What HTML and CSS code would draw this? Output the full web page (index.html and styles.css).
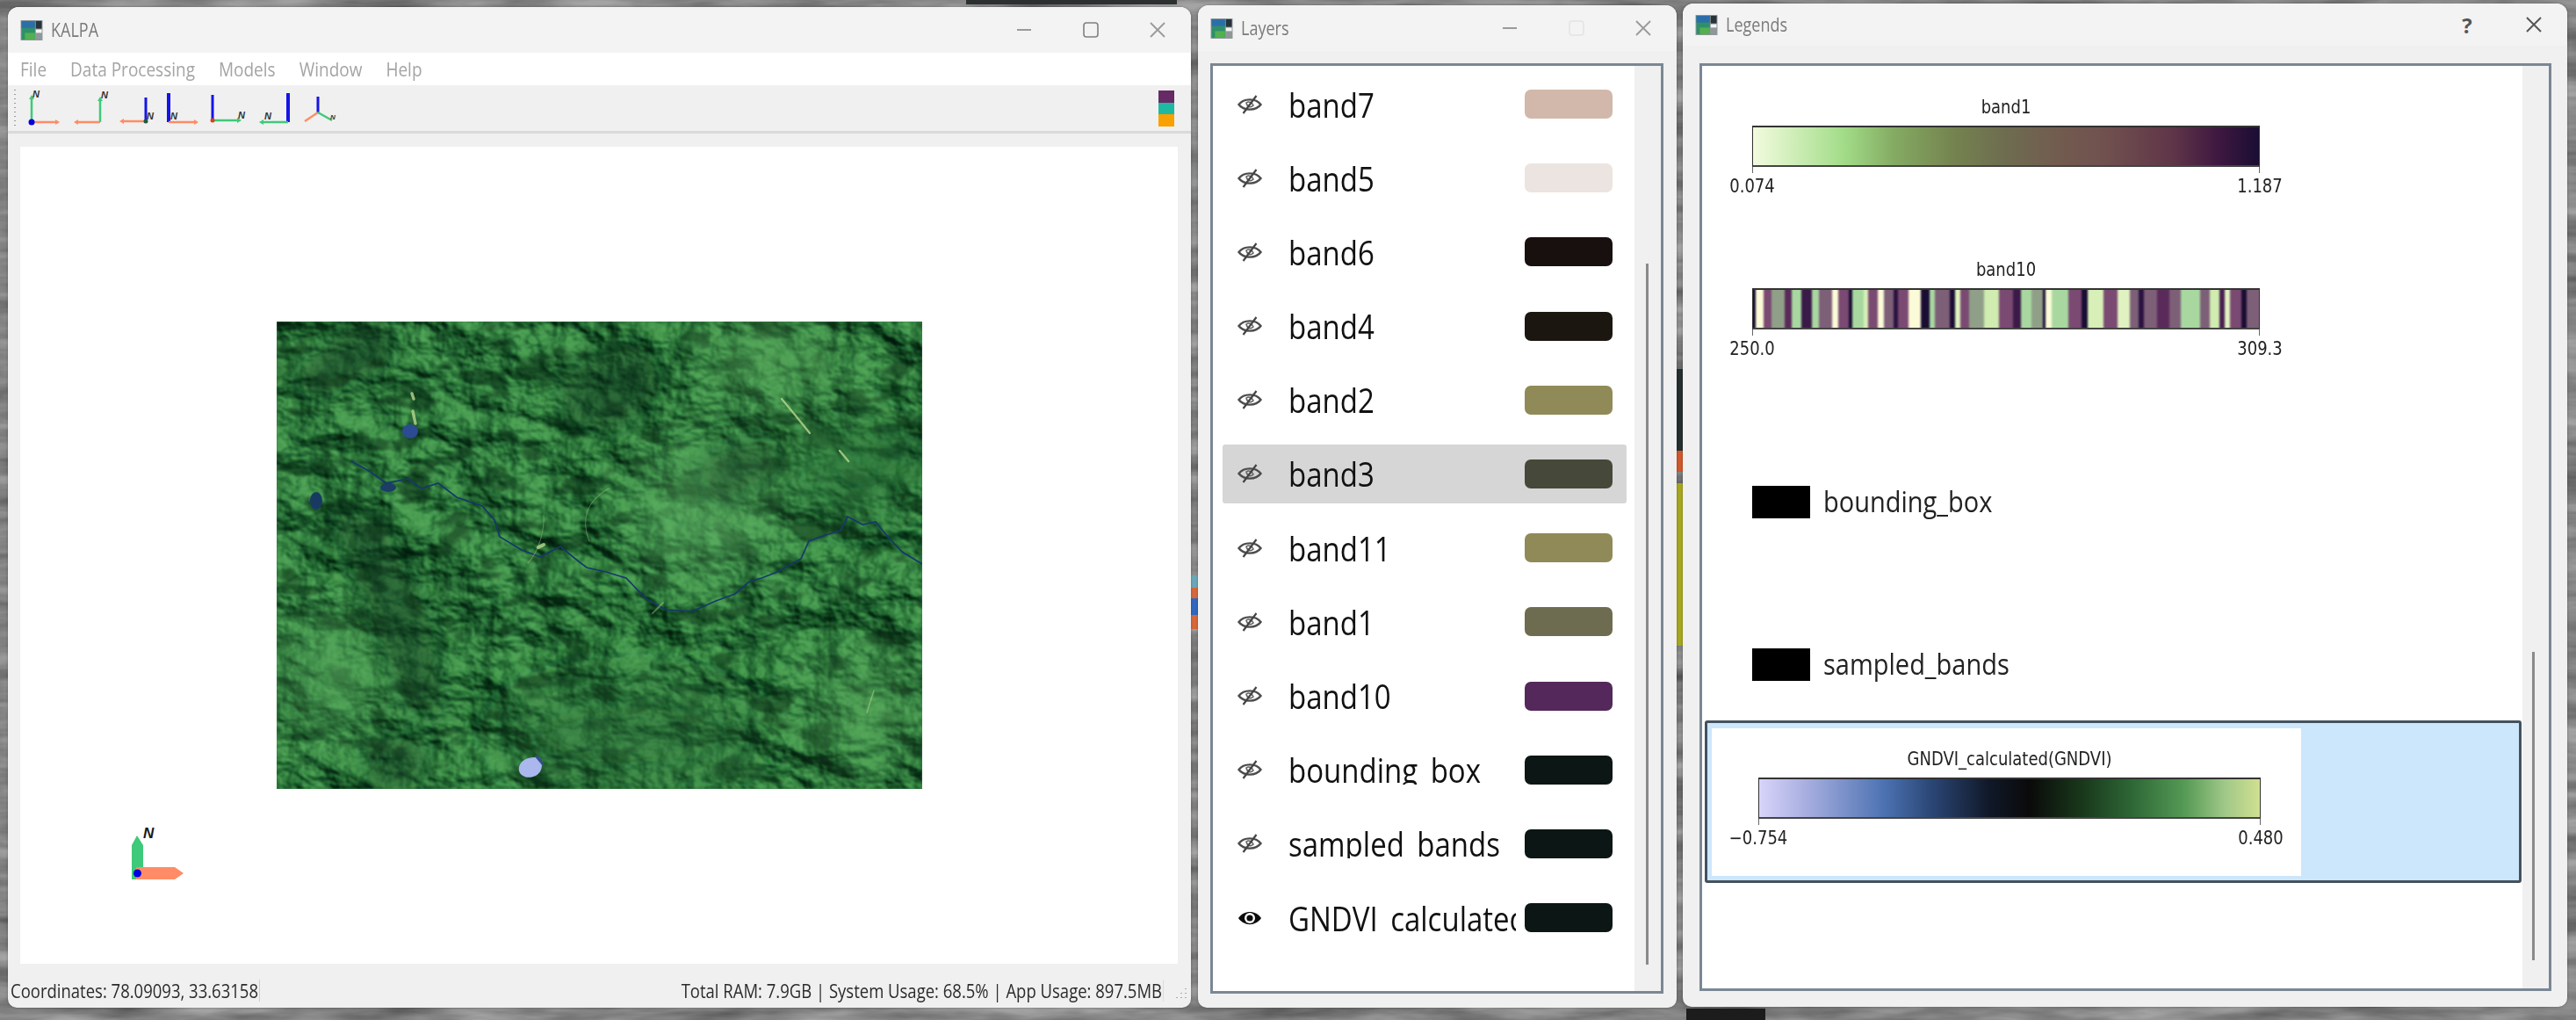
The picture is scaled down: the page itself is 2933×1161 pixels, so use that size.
FILE: index.html
```html
<!DOCTYPE html>
<html lang="en">
<head>
  <meta charset="UTF-8" />
  <title>KALPA</title>
  <link rel="stylesheet" href="styles.css">
</head>
<body>

  <!-- Wallpaper noise behind the windows -->
  <svg class="wallpaper" width="2933" height="1161">
    <filter id="wall-noise" x="0" y="0" width="100%" height="100%" color-interpolation-filters="sRGB">
      <feTurbulence type="fractalNoise" baseFrequency="0.008 0.05" numOctaves="4" seed="4"/>
      <feColorMatrix values="0 0 0 0 0  0 0 0 0 0  0 0 0 0 0  0.7 0 0 0 -0.15"/>
    </filter>
    <rect width="2933" height="1161" fill="#a4a4a4"/>
    <rect width="2933" height="1161" filter="url(#wall-noise)"/>
    <rect x="1100" y="0" width="240" height="5" fill="#2c3030"/>
    <rect x="1920" y="1148" width="90" height="13" fill="#1c1c1c"/>
    <rect x="1356" y="655" width="8" height="14" fill="#6aa8b8"/>
    <rect x="1356" y="669" width="8" height="12" fill="#d8683a"/>
    <rect x="1356" y="681" width="8" height="19" fill="#3068c0"/>
    <rect x="1356" y="700" width="8" height="16" fill="#d8683a"/>
    <rect x="1909" y="420" width="7" height="93" fill="#263030"/>
    <rect x="1909" y="513" width="7" height="24" fill="#d05a2c"/>
    <rect x="1909" y="550" width="7" height="185" fill="#a8a820"/>
  </svg>

  <svg class="defs" width="0" height="0">
    <symbol id="logo" viewBox="0 0 26 24">
      <rect width="26" height="24" fill="#8f979b"/>
      <rect x="1" y="1" width="16" height="22" fill="#2f8f6a"/>
      <rect x="1" y="1" width="16" height="8" fill="#2c6fa8"/>
      <rect x="5" y="15" width="12" height="8" fill="#52b050"/>
      <rect x="18" y="1" width="7" height="9" fill="#26333a"/>
      <rect x="18" y="11" width="7" height="4" fill="#f4f4f4"/>
    </symbol>
    <symbol id="eye-off" viewBox="0 0 28 22">
      <path d="M1.5 11 C7 3.5 21 3.5 26.5 11 C21 18.5 7 18.5 1.5 11 Z" fill="none" stroke="#4c4c4c" stroke-width="2.4"/>
      <path d="M10 9 C13 6.5 17 9 18 12 C15 15 11 14 10 9 Z" fill="none" stroke="#666" stroke-width="1.6"/>
      <line x1="6.5" y1="21" x2="21.5" y2="1" stroke="#444" stroke-width="2.2"/>
    </symbol>
    <symbol id="eye-on" viewBox="0 0 28 20">
      <path d="M1 10 C7 0.5 21 0.5 27 10 C21 19.5 7 19.5 1 10 Z" fill="#0c0c0c"/>
      <circle cx="14" cy="10" r="6" fill="#fff"/>
      <circle cx="14" cy="10" r="3.6" fill="#0c0c0c"/>
    </symbol>
  </svg>

  <!-- Main window -->
  <section class="window main-window">
    <header class="titlebar">
      <svg class="logo"><use href="#logo"/></svg>
      <span class="win-title"><span class="tall">KALPA</span></span>
      <div class="win-btn">
        <svg width="18" height="18"><line x1="1" y1="9" x2="17" y2="9" stroke="#9a9a9a" stroke-width="2"/></svg>
      </div>
      <div class="win-btn">
        <svg width="18" height="18"><rect x="1" y="1" width="16" height="16" rx="3" fill="none" stroke="#808080" stroke-width="1.6"/></svg>
      </div>
      <div class="win-btn">
        <svg width="18" height="18"><path d="M1 1 L17 17 M17 1 L1 17" stroke="#9a9a9a" stroke-width="1.8"/></svg>
      </div>
    </header>

    <nav class="menubar">
      <span class="tall">File</span>
      <span class="tall">Data Processing</span>
      <span class="tall">Models</span>
      <span class="tall">Window</span>
      <span class="tall">Help</span>
    </nav>

    <div class="toolbar">
      <svg class="axes" width="400" height="53" viewBox="0 97 400 53">
        <!-- grip -->
        <path d="M17 102v1M17 107v1M17 112v1M17 117v1M17 122v1M17 127v1M17 132v1M17 137v1M17 142v1" stroke="#999" stroke-width="2"/>
        <g class="axis-lines">
          <!-- north up -->
          <path class="green" d="M36 139V112"/><path class="orange" d="M36 139H64"/>
          <path class="green-fill" d="M33 113l3-5 3 5z"/><path class="orange-fill" d="M63 136l5 3-5 3z"/>
          <circle cx="36" cy="139" r="3.5" fill="#0000e0"/>
          <text x="37" y="111">N</text>
          <!-- north up, east left -->
          <path class="green" d="M114 139V114"/><path class="orange" d="M114 139H88"/>
          <path class="green-fill" d="M111 115l3-5 3 5z"/><path class="orange-fill" d="M89 136l-5 3 5 3z"/>
          <text x="115" y="112">N</text>
          <!-- blue up, orange left -->
          <path class="blue" d="M166 138V111"/><path class="orange" d="M166 138H140"/>
          <path class="orange-fill" d="M141 135l-5 3 5 3z"/>
          <circle cx="166" cy="138" r="2.5" fill="#1f5a40"/>
          <text x="167" y="136">N</text>
          <!-- blue up, orange right -->
          <path class="blue wide" d="M192 139V106"/><path class="orange" d="M192 139H222"/>
          <path class="orange-fill" d="M221 136l5 3-5 3z"/>
          <text x="194" y="136">N</text>
          <!-- blue up, green right -->
          <path class="blue" d="M242 137V108"/><path class="green" d="M242 137H271"/>
          <path class="green-fill" d="M270 134l5 3-5 3z"/>
          <circle cx="242" cy="137" r="2.5" fill="#d8401c"/>
          <text x="271" y="135">N</text>
          <!-- blue up, green left -->
          <path class="blue wide" d="M328 139V106"/><path class="green" d="M328 139H299"/>
          <path class="green-fill" d="M300 136l-5 3 5 3z"/>
          <text x="301" y="136">N</text>
          <!-- iso -->
          <path class="blue" d="M362 128V110"/><path class="orange" d="M362 128L347 138"/><path class="green" d="M362 128L378 137"/>
          <text x="376" y="136" class="small">N</text>
        </g>
      </svg>
      <div class="colour-chip">
        <span class="chip-purple"></span>
        <span class="chip-teal"></span>
        <span class="chip-orange"></span>
      </div>
    </div>

    <div class="canvas-wrap">
      <div class="canvas">
        <!-- Hillshade drawn from noise, with the river and lakes on top -->
        <svg class="map" width="735" height="532" viewBox="0 0 735 532">
          <defs>
            <filter id="terrain" x="0" y="0" width="100%" height="100%" color-interpolation-filters="sRGB">
              <feTurbulence type="fractalNoise" baseFrequency="0.012 0.018" numOctaves="6" seed="23" result="noise"/>
              <feDiffuseLighting in="noise" surfaceScale="24" diffuseConstant="0.86" lighting-color="#ffffff">
                <feDistantLight azimuth="320" elevation="52"/>
              </feDiffuseLighting>
              <feGaussianBlur stdDeviation="0.8"/>
              <feComponentTransfer>
                <feFuncR type="table" tableValues="0.01 0.03 0.08 0.14 0.20 0.30 0.55"/>
                <feFuncG type="table" tableValues="0.10 0.18 0.30 0.40 0.50 0.63 0.82"/>
                <feFuncB type="table" tableValues="0.05 0.08 0.14 0.20 0.25 0.33 0.48"/>
              </feComponentTransfer>
            </filter>
            <!-- dark valleys scattered over the hills -->
            <filter id="valleys" x="0" y="0" width="100%" height="100%" color-interpolation-filters="sRGB">
              <feTurbulence type="fractalNoise" baseFrequency="0.022 0.04" numOctaves="3" seed="9"/>
              <feColorMatrix values="0 0 0 0 0.03  0 0 0 0 0.17  0 0 0 0 0.08  7 0 0 0 -3.9"/>
              <feGaussianBlur stdDeviation="1.2"/>
            </filter>
            <filter id="soft"><feGaussianBlur stdDeviation="14"/></filter>
            <filter id="softer" x="-50%" y="-50%" width="200%" height="200%"><feGaussianBlur stdDeviation="30"/></filter>
          </defs>
          <rect width="735" height="532" fill="#2f7a3d"/>
          <rect width="735" height="532" filter="url(#terrain)"/>
          <rect width="735" height="532" filter="url(#valleys)" opacity=".55"/>
          <!-- broad light and dark areas -->
          <g filter="url(#softer)">
            <ellipse cx="485" cy="215" rx="75" ry="75" fill="#62b266" opacity=".55"/>
            <ellipse cx="560" cy="45" rx="80" ry="40" fill="#5aa95e" opacity=".6"/>
            <ellipse cx="60" cy="400" rx="60" ry="70" fill="#58a65c" opacity=".55"/>
            <ellipse cx="670" cy="440" rx="60" ry="60" fill="#5aa85c" opacity=".5"/>
            <ellipse cx="660" cy="170" rx="70" ry="50" fill="#2a6e38" opacity=".7"/>
            <ellipse cx="400" cy="470" rx="150" ry="60" fill="#2a6b36" opacity=".5"/>
          </g>
          <g filter="url(#soft)" fill="#08301a" opacity=".5">
            <path d="M60 210 L120 230 L175 340 L190 450 L150 440 L110 340 Z"/>
            <path d="M90 0 L130 0 L125 50 L40 90 L20 60 Z"/>
            <path d="M320 60 L420 20 L440 80 L380 130 L330 110 Z"/>
            <path d="M480 160 L560 130 L570 170 L500 210 Z"/>
            <path d="M100 480 L170 470 L160 532 L110 532 Z"/>
            <path d="M680 110 L735 130 L735 180 L690 150 Z" opacity=".5"/>
          </g>
          <!-- river -->
          <path d="M85 159 L105 170 L125 184 L149 179 L165 190 L184 184 L205 200 L234 210 L248 226 L254 245 L279 260 L300 268 L323 256 L340 270 L353 280 L375 285 L398 292 L420 315 L443 328 L473 330 L500 318 L522 310 L538 296 L552 292 L570 285 L597 270 L606 250 L625 243 L642 238 L650 222 L667 231 L682 228 L696 245 L712 262 L735 276" fill="none" stroke="#16386a" stroke-width="1.7"/>
          <!-- lakes -->
          <ellipse cx="152" cy="125" rx="9" ry="8" fill="#2b4b92"/>
          <ellipse cx="45" cy="204" rx="7" ry="10" fill="#183a62"/>
          <ellipse cx="127" cy="189" rx="9" ry="5" fill="#1c3d66"/>
          <path d="M276 507 C278 497 292 494 300 497 C304 505 302 515 292 518 C284 521 274 516 276 507 Z" fill="#aab8ee"/>
          <path d="M293 494 C300 494 304 500 303 506 L298 500 Z" fill="#36508a"/>
          <!-- bright streaks -->
          <g fill="none" stroke="#bcd88e" stroke-linecap="round" opacity=".8">
            <path d="M575 88 L590 106 L607 127" stroke-width="2.2"/>
            <path d="M641 147 L651 159" stroke-width="2.4"/>
            <path d="M154 82 L156 88 M155 102 L158 116" stroke-width="3.5"/>
            <path d="M298 257 L304 254" stroke-width="4"/>
            <path d="M428 332 L440 320" stroke-width="2" opacity=".5"/>
            <path d="M286 275 C300 260 305 235 304 220" stroke-width="1.1" opacity=".45"/>
            <path d="M356 250 C346 225 352 205 378 190" stroke-width="1.1" opacity=".45"/>
            <path d="M672 445 L680 420" stroke-width="1.6" opacity=".6"/>
          </g>
        </svg>

        <!-- Compass overlay in the corner of the map canvas -->
        <svg class="compass" width="80" height="72" viewBox="0 0 80 72">
          <path d="M21 22 L27 11 L34 22 L34 61 L21 61 Z" fill="#3fc97a"/>
          <path d="M26 47 H70 L80 54 L70 61 H26 Z" fill="#ff8c66"/>
          <circle cx="27.5" cy="54" r="4.5" fill="#0000e0"/>
          <text x="34" y="14">N</text>
        </svg>
      </div>
    </div>

    <footer class="statusbar">
      <span class="coords"><span class="tall">Coordinates: 78.09093, 33.63158</span></span>
      <span class="usage"><span class="tall">Total RAM: 7.9GB | System Usage: 68.5% | App Usage: 897.5MB</span></span>
      <svg class="grip" width="14" height="14"><path d="M11 2v1M11 7v1M11 12v1M6 7v1M6 12v1M1 12v1" stroke="#aaa" stroke-width="2"/></svg>
    </footer>
  </section>

  <!-- Layers window -->
  <section class="window layers-window">
    <header class="titlebar">
      <svg class="logo"><use href="#logo"/></svg>
      <span class="win-title"><span class="tall">Layers</span></span>
      <div class="win-btn">
        <svg width="18" height="18"><line x1="1" y1="9" x2="17" y2="9" stroke="#9a9a9a" stroke-width="2"/></svg>
      </div>
      <div class="win-btn">
        <svg width="18" height="18"><rect x="1" y="1" width="16" height="16" rx="3" fill="none" stroke="#e4e4e4" stroke-width="1.6"/></svg>
      </div>
      <div class="win-btn">
        <svg width="18" height="18"><path d="M1 1 L17 17 M17 1 L1 17" stroke="#9a9a9a" stroke-width="1.8"/></svg>
      </div>
    </header>

    <div class="frame">
      <ul class="layer-list">
        <li class="layer"><svg class="eye"><use href="#eye-off"/></svg><span class="layer-name"><span class="tall">band7</span></span><span class="swatch c-band7"></span></li>
        <li class="layer"><svg class="eye"><use href="#eye-off"/></svg><span class="layer-name"><span class="tall">band5</span></span><span class="swatch c-band5"></span></li>
        <li class="layer"><svg class="eye"><use href="#eye-off"/></svg><span class="layer-name"><span class="tall">band6</span></span><span class="swatch c-band6"></span></li>
        <li class="layer"><svg class="eye"><use href="#eye-off"/></svg><span class="layer-name"><span class="tall">band4</span></span><span class="swatch c-band4"></span></li>
        <li class="layer"><svg class="eye"><use href="#eye-off"/></svg><span class="layer-name"><span class="tall">band2</span></span><span class="swatch c-band2"></span></li>
        <li class="layer selected"><svg class="eye"><use href="#eye-off"/></svg><span class="layer-name"><span class="tall">band3</span></span><span class="swatch c-band3"></span></li>
        <li class="layer"><svg class="eye"><use href="#eye-off"/></svg><span class="layer-name"><span class="tall">band11</span></span><span class="swatch c-band2"></span></li>
        <li class="layer"><svg class="eye"><use href="#eye-off"/></svg><span class="layer-name"><span class="tall">band1</span></span><span class="swatch c-band1"></span></li>
        <li class="layer"><svg class="eye"><use href="#eye-off"/></svg><span class="layer-name"><span class="tall">band10</span></span><span class="swatch c-band10"></span></li>
        <li class="layer"><svg class="eye"><use href="#eye-off"/></svg><span class="layer-name clipped"><span class="tall">bounding_box</span></span><span class="swatch c-dark"></span></li>
        <li class="layer"><svg class="eye"><use href="#eye-off"/></svg><span class="layer-name clipped"><span class="tall">sampled_bands</span></span><span class="swatch c-dark"></span></li>
        <li class="layer"><svg class="eye eye-on"><use href="#eye-on"/></svg><span class="layer-name clipped"><span class="tall">GNDVI_calculated(GNDVI)</span></span><span class="swatch c-dark"></span></li>
      </ul>
      <div class="scroll layers-scroll"><span class="thumb"></span></div>
    </div>
  </section>

  <!-- Legends window -->
  <section class="window legends-window">
    <header class="titlebar">
      <svg class="logo"><use href="#logo"/></svg>
      <span class="win-title"><span class="tall">Legends</span></span>
      <div class="win-btn help">?</div>
      <div class="win-btn">
        <svg width="20" height="18"><path d="M2 1 L18 17 M18 1 L2 17" stroke="#555" stroke-width="2"/></svg>
      </div>
    </header>

    <div class="frame">
      <div class="legend-list">

        <div class="legend-item">
          <div class="colorbar">
            <div class="cb-title"><span class="tall">band1</span></div>
            <div class="cb-bar grad-band1"></div>
            <div class="cb-ticks"></div>
            <div class="cb-labels"><span><span class="tall">0.074</span></span><span><span class="tall">1.187</span></span></div>
          </div>
        </div>

        <div class="legend-item">
          <div class="colorbar">
            <div class="cb-title"><span class="tall">band10</span></div>
            <div class="cb-bar stripes"></div>
            <div class="cb-ticks"></div>
            <div class="cb-labels"><span><span class="tall">250.0</span></span><span><span class="tall">309.3</span></span></div>
          </div>
        </div>

        <div class="legend-item vector-item">
          <span class="vector-box"></span>
          <span class="vector-name"><span class="tall">bounding_box</span></span>
        </div>

        <div class="legend-item vector-item">
          <span class="vector-box"></span>
          <span class="vector-name"><span class="tall">sampled_bands</span></span>
        </div>

        <div class="legend-item selected-legend">
          <div class="legend-inner">
            <div class="colorbar narrow">
              <div class="cb-title"><span class="tall">GNDVI_calculated(GNDVI)</span></div>
              <div class="cb-bar grad-gndvi"></div>
              <div class="cb-ticks"></div>
              <div class="cb-labels"><span><span class="tall">&minus;0.754</span></span><span><span class="tall">0.480</span></span></div>
            </div>
          </div>
        </div>

      </div>
      <div class="scroll legends-scroll"><span class="thumb"></span></div>
    </div>
  </section>

</body>
</html>
```

FILE: styles.css
```css
/* General */
* {
  box-sizing: border-box;
}

body {
  position: relative;
  width: 2933px;
  height: 1161px;
  margin: 0;
  overflow: hidden;
  background: #8a8a8a;
  font-family: "Open Sans", "Noto Sans", sans-serif;
}

.wallpaper {
  position: absolute;
  left: 0;
  top: 0;
}

.defs {
  position: absolute;
}

/* Screenshot is stretched a little in height */
.tall {
  display: inline-block;
  transform: scaleY(1.16);
}

/* Windows sit on the desktop at their own place */
.window {
  position: absolute;
  display: flex;
  flex-direction: column;
  background: #f0f0f0;
  border-radius: 12px 12px 10px 10px;
  box-shadow: 0 0 3px rgba(0, 0, 0, 0.35);
}

.main-window {
  left: 9px;
  top: 8px;
  width: 1347px;
  height: 1139px;
}

.layers-window {
  left: 1364px;
  top: 6px;
  width: 545px;
  height: 1141px;
}

.legends-window {
  left: 1916px;
  top: 4px;
  width: 1007px;
  height: 1142px;
}

/* Title bar */
.titlebar {
  display: flex;
  align-items: center;
  flex: none;
  height: 52px;
  padding-left: 14px;
  background: #f3f3f3;
  border-radius: 12px 12px 0 0;
}

.legends-window .titlebar {
  height: 48px;
}

.logo {
  flex: none;
  width: 26px;
  height: 23px;
  margin-right: 9px;
}

.win-title {
  flex: 1;
  font-size: 18px;
  color: #7a7a7a;
}

.win-btn {
  display: flex;
  align-items: center;
  justify-content: center;
  flex: none;
  width: 76px;
}

.help {
  font-size: 24px;
  font-weight: 700;
  color: #555;
}

/* Menu */
.menubar {
  display: flex;
  align-items: center;
  gap: 27px;
  flex: none;
  height: 37px;
  padding-left: 14px;
  background: #fff;
  font-size: 19px;
  color: #a4a4a4;
}

/* Toolbar */
.toolbar {
  display: flex;
  align-items: flex-start;
  justify-content: space-between;
  flex: none;
  height: 55px;
  padding-right: 19px;
  background: #f0f0f0;
  border-bottom: 3px solid #d9d9d9;
}

.axes {
  margin-left: -9px;
}

.axis-lines path {
  fill: none;
}

.axis-lines .green {
  stroke: #3fc97a;
  stroke-width: 2.5;
}

.axis-lines .orange {
  stroke: #ff8c66;
  stroke-width: 2.5;
}

.axis-lines .blue {
  stroke: #1414e8;
  stroke-width: 3;
}

.axis-lines .wide {
  stroke-width: 4;
}

.axis-lines .green-fill {
  fill: #3fc97a;
}

.axis-lines .orange-fill {
  fill: #ff8c66;
}

.axis-lines text {
  font-family: "Liberation Sans", sans-serif;
  font-size: 11px;
  font-weight: 700;
  font-style: italic;
  fill: #333;
}

.axis-lines text.small {
  font-size: 8px;
}

.colour-chip {
  display: flex;
  flex-direction: column;
  width: 18px;
  margin-top: 6px;
}

.colour-chip span {
  height: 13.5px;
}

.chip-purple {
  background: #662a66;
}

.chip-teal {
  background: #1fb9a1;
}

.chip-orange {
  background: #f8a100;
}

/* Map canvas */
.canvas-wrap {
  flex: 1;
  padding: 15px 15px 0 14px;
}

.canvas {
  position: relative;
  display: flex;
  align-items: center;
  justify-content: center;
  height: 100%;
  background: #fff;
}

.map {
  display: block;
}

.compass {
  position: absolute;
  left: 106px;
  top: 773px;
}

.compass text {
  font-family: "Liberation Sans", sans-serif;
  font-size: 17px;
  font-weight: 700;
  font-style: italic;
  fill: #1a1a1a;
}

/* Status bar */
.statusbar {
  display: flex;
  align-items: center;
  justify-content: space-between;
  flex: none;
  height: 50px;
  padding: 10px 0 0 3px;
  font-size: 18.5px;
  color: #2b2b2b;
}

.coords {
  padding-right: 1px;
  border-right: 1px solid #cfcfcf;
}

.usage {
  margin-left: auto;
  padding-right: 1px;
  border-right: 1px solid #dcdcdc;
}

.grip {
  margin: 6px 3px 0 14px;
}

/* Frames holding the lists */
.frame {
  display: flex;
  flex: 1;
  margin: 14px 15px 16px 14px;
  background: #fff;
  border: 3px solid #7a8794;
}

.legends-window .frame {
  margin: 20px 18px 18px 19px;
}

.scroll {
  position: relative;
  flex: none;
  width: 30px;
  background: #f0f0f0;
}

.thumb {
  display: block;
  width: 3px;
  background: #8a8a8a;
}

.layers-scroll .thumb {
  height: 798px;
  margin: 225px 0 0 13px;
}

.legends-scroll .thumb {
  height: 351px;
  margin: 667px 0 0 11px;
}

/* Layer rows */
.layer-list {
  flex: 1;
  min-width: 0;
  display: flex;
  flex-direction: column;
  gap: 17.2px;
  margin: 0;
  padding: 10px 9px 0 11px;
  list-style: none;
}

.layer {
  display: flex;
  align-items: center;
  flex: none;
  height: 67px;
  padding: 0 16px 0 17px;
  border-radius: 3px;
  font-size: 33px;
  color: #111;
}

.layer.selected {
  background: #d6d6d6;
}

.eye {
  flex: none;
  width: 28px;
  height: 22px;
}

.eye-on {
  height: 20px;
}

.layer-name {
  flex: 1;
  min-width: 0;
  height: 46px;
  margin: 2px 10px 0 30px;
  white-space: nowrap;
  line-height: 46px;
}

/* Long names are cut just under the baseline, as in the app */
.clipped {
  height: 39px;
  margin: -5px 10px 0 30px;
  padding-top: 0;
  overflow: hidden;
}

.swatch {
  flex: none;
  width: 100px;
  height: 33px;
  border-radius: 7px;
}

.c-band7 { background: #d2b8aa; }
.c-band5 { background: #ece4e0; }
.c-band6 { background: #18100f; }
.c-band4 { background: #1c1610; }
.c-band2 { background: #908a58; }
.c-band3 { background: #46483a; }
.c-band1 { background: #6e6c50; }
.c-band10 { background: #54285a; }
.c-dark { background: #0c1614; }

/* Legend entries */
.legend-list {
  flex: 1;
  min-width: 0;
  padding-top: 3px;
}

.legend-item {
  height: 185px;
}

.colorbar {
  width: 578px;
  margin-left: 57px;
  padding-top: 33px;
  font-family: "DejaVu Sans", sans-serif;
  font-size: 18px;
  color: #222;
}

.cb-title {
  height: 32px;
  line-height: 22px;
  text-align: center;
}

.cb-bar {
  height: 47px;
  border-top: 2px solid #333;
  border-bottom: 2px solid #444;
  border-left: 1px solid #333;
  border-right: 1px solid #333;
}

.cb-ticks {
  height: 7px;
  border-left: 1px solid #666;
  border-right: 1px solid #666;
}

.cb-labels {
  display: flex;
  justify-content: space-between;
  margin: 4px -50px 0;
  line-height: 22px;
}

.cb-labels > span {
  width: 100px;
  text-align: center;
}

.grad-band1 {
  background: linear-gradient(to right, #f2fbdf 0%, #cfeeb8 8%, #a2dc88 18%, #84aa62 28%, #74824f 40%, #6e6c50 50%, #72594f 62%, #70504f 70%, #5f3548 83%, #3e1840 92%, #1a0d33 100%);
}

/* Stripes are softened with a blur, the bar border stays sharp */
.stripes {
  position: relative;
  overflow: hidden;
}

.stripes::before {
  content: "";
  position: absolute;
  left: -3px;
  right: -3px;
  top: -3px;
  bottom: -3px;
  filter: blur(1.2px);
  background: linear-gradient(to right,
    #1a0d33 0 1.1%, #fbfbd8 1.1% 2.5%, #7a4a72 2.5% 4.2%, #90a088 4.2% 6.7%, #5a2a5a 6.7% 8.1%,
    #a8d8a0 8.1% 10%, #3a1a48 10% 12%, #a8d8a0 12% 13.4%, #7d5f78 13.4% 15.9%, #fbfbd8 15.9% 17.2%,
    #7a4a72 17.2% 19.3%, #1a0d33 19.3% 19.9%, #a8d8a0 19.9% 22.2%, #d8efb8 22.2% 23%, #7a4a72 23% 24.9%,
    #fbfbd8 24.9% 26.2%, #7d5f78 26.2% 28%, #2a1240 28% 28.9%, #7a4a72 28.9% 31%, #fbfbd8 31% 33.3%,
    #1a0d33 33.3% 35%, #a8d8a0 35% 36%, #7d5f78 36% 39%, #1a0d33 39% 40%, #e0f2c0 40% 41%,
    #7a4a72 41% 42.7%, #90a088 42.7% 45.7%, #d0ecb0 45.7% 48.6%, #7a4a72 48.6% 51.4%, #3a1a48 51.4% 53%,
    #a8d8a0 53% 55%, #90a088 55% 57.2%, #1a0d33 57.2% 57.8%, #fbfbd8 57.8% 59%, #a8d8a0 59% 62.2%,
    #7a4a72 62.2% 64.7%, #1a0d33 64.7% 66%, #d8efb8 66% 69%, #7a4a72 69% 71.8%, #e0f2c0 71.8% 74.2%,
    #7d5f78 74.2% 75.9%, #2a1240 75.9% 77%, #7d5f78 77% 79.6%, #5a2a5a 79.6% 81.9%, #7d5f78 81.9% 84.2%,
    #a8d8a0 84.2% 88%, #7d5f78 88% 89.9%, #d0ecb0 89.9% 91.8%, #4a2050 91.8% 92.8%, #e0f2c0 92.8% 93.9%,
    #7a4a72 93.9% 96%, #1a0d33 96% 97%, #7d5f78 97% 100%);
}

.grad-gndvi {
  background: linear-gradient(to right, #d8d4fa 0%, #a4acde 10%, #4c72b2 25%, #2c4878 34%, #101828 46%, #0a0a0a 54%, #1a3a1c 65%, #2f6a38 75%, #559a55 85%, #a0c888 93%, #d0e090 100%);
}

.vector-item {
  display: flex;
  align-items: center;
  padding: 105px 0 43px 57px;
}

.vector-box {
  flex: none;
  width: 66px;
  height: 37px;
  background: #000;
}

.vector-name {
  margin: 0 0 4px 15px;
  font-size: 29px;
  color: #222;
}

.selected-legend {
  margin: 2px 0 0 3px;
  width: 930px;
  padding: 6px 0 5px 5px;
  background: #cce6fb;
  border: 3px solid #44525e;
  border-radius: 3px;
}

.legend-inner {
  width: 671px;
  height: 100%;
  background: #fff;
}

.narrow {
  width: 572px;
  margin-left: 53px;
  padding-top: 24px;
}
```
